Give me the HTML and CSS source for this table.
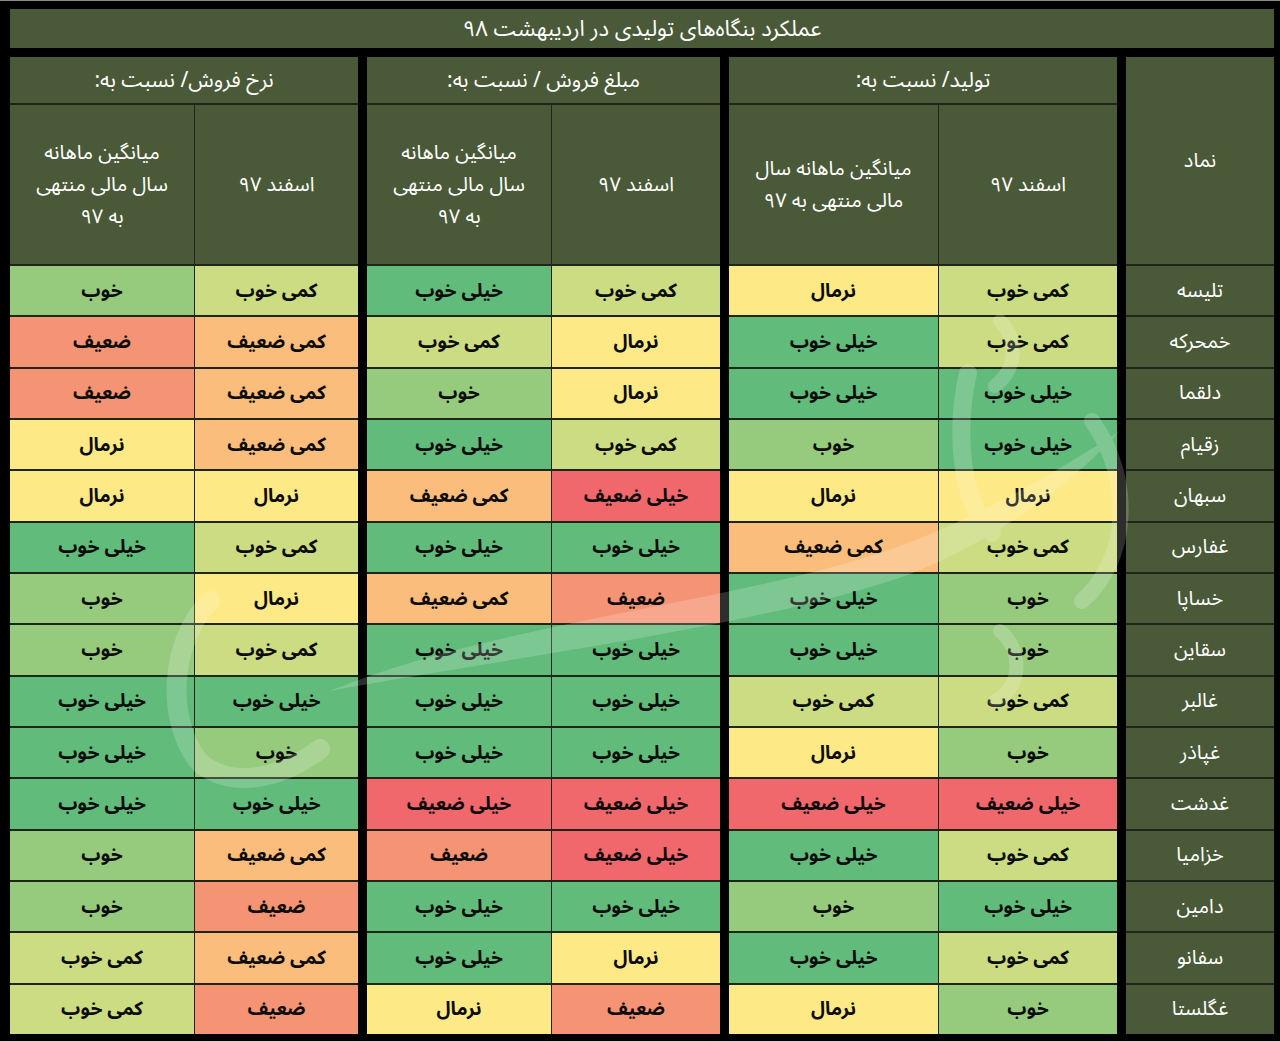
FILE: index.html
```html
<!DOCTYPE html>
<html lang="fa" dir="rtl">
<head>
<meta charset="utf-8">
<title>عملکرد بنگاه‌های تولیدی در اردیبهشت ۹۸</title>
<link rel="stylesheet" href="styles.css">
</head>
<body>
<div class="page">
  <div class="title">عملکرد بنگاه‌های تولیدی در اردیبهشت ۹۸</div>
  <div class="table">
    <div class="col-sym">
      <div class="hd sym-hd">نماد</div>
      <div class="sym">تلیسه</div>
      <div class="sym">خمحرکه</div>
      <div class="sym">دلقما</div>
      <div class="sym">زقیام</div>
      <div class="sym">سبهان</div>
      <div class="sym">غفارس</div>
      <div class="sym">خساپا</div>
      <div class="sym">سقاین</div>
      <div class="sym">غالبر</div>
      <div class="sym">غپاذر</div>
      <div class="sym">غدشت</div>
      <div class="sym">خزامیا</div>
      <div class="sym">دامین</div>
      <div class="sym">سفانو</div>
      <div class="sym">غگلستا</div>
    </div>

    <div class="group g-prod">
      <div class="hd group-hd">تولید/ نسبت به:</div>
      <div class="hd sub">اسفند ۹۷</div>
      <div class="hd sub"><span class="ln">میانگین ماهانه سال</span><span class="ln">مالی منتهی به ۹۷</span></div>
      <div class="c c3">کمی خوب</div><div class="c c4">نرمال</div>
      <div class="c c3">کمی خوب</div><div class="c c1">خیلی خوب</div>
      <div class="c c1">خیلی خوب</div><div class="c c1">خیلی خوب</div>
      <div class="c c1">خیلی خوب</div><div class="c c2">خوب</div>
      <div class="c c4">نرمال</div><div class="c c4">نرمال</div>
      <div class="c c3">کمی خوب</div><div class="c c5">کمی ضعیف</div>
      <div class="c c2">خوب</div><div class="c c1">خیلی خوب</div>
      <div class="c c2">خوب</div><div class="c c1">خیلی خوب</div>
      <div class="c c3">کمی خوب</div><div class="c c3">کمی خوب</div>
      <div class="c c2">خوب</div><div class="c c4">نرمال</div>
      <div class="c c7">خیلی ضعیف</div><div class="c c7">خیلی ضعیف</div>
      <div class="c c3">کمی خوب</div><div class="c c1">خیلی خوب</div>
      <div class="c c1">خیلی خوب</div><div class="c c2">خوب</div>
      <div class="c c3">کمی خوب</div><div class="c c1">خیلی خوب</div>
      <div class="c c2">خوب</div><div class="c c4">نرمال</div>
    </div>

    <div class="group g-amount">
      <div class="hd group-hd">مبلغ فروش / نسبت به:</div>
      <div class="hd sub">اسفند ۹۷</div>
      <div class="hd sub"><span class="ln">میانگین ماهانه</span><span class="ln">سال مالی منتهی</span><span class="ln">به ۹۷</span></div>
      <div class="c c3">کمی خوب</div><div class="c c1">خیلی خوب</div>
      <div class="c c4">نرمال</div><div class="c c3">کمی خوب</div>
      <div class="c c4">نرمال</div><div class="c c2">خوب</div>
      <div class="c c3">کمی خوب</div><div class="c c1">خیلی خوب</div>
      <div class="c c7">خیلی ضعیف</div><div class="c c5">کمی ضعیف</div>
      <div class="c c1">خیلی خوب</div><div class="c c1">خیلی خوب</div>
      <div class="c c6">ضعیف</div><div class="c c5">کمی ضعیف</div>
      <div class="c c1">خیلی خوب</div><div class="c c1">خیلی خوب</div>
      <div class="c c1">خیلی خوب</div><div class="c c1">خیلی خوب</div>
      <div class="c c1">خیلی خوب</div><div class="c c1">خیلی خوب</div>
      <div class="c c7">خیلی ضعیف</div><div class="c c7">خیلی ضعیف</div>
      <div class="c c7">خیلی ضعیف</div><div class="c c6">ضعیف</div>
      <div class="c c1">خیلی خوب</div><div class="c c1">خیلی خوب</div>
      <div class="c c4">نرمال</div><div class="c c1">خیلی خوب</div>
      <div class="c c6">ضعیف</div><div class="c c4">نرمال</div>
    </div>

    <div class="group g-rate">
      <div class="hd group-hd">نرخ فروش/ نسبت به:</div>
      <div class="hd sub">اسفند ۹۷</div>
      <div class="hd sub"><span class="ln">میانگین ماهانه</span><span class="ln">سال مالی منتهی</span><span class="ln">به ۹۷</span></div>
      <div class="c c3">کمی خوب</div><div class="c c2">خوب</div>
      <div class="c c5">کمی ضعیف</div><div class="c c6">ضعیف</div>
      <div class="c c5">کمی ضعیف</div><div class="c c6">ضعیف</div>
      <div class="c c5">کمی ضعیف</div><div class="c c4">نرمال</div>
      <div class="c c4">نرمال</div><div class="c c4">نرمال</div>
      <div class="c c3">کمی خوب</div><div class="c c1">خیلی خوب</div>
      <div class="c c4">نرمال</div><div class="c c2">خوب</div>
      <div class="c c3">کمی خوب</div><div class="c c2">خوب</div>
      <div class="c c1">خیلی خوب</div><div class="c c1">خیلی خوب</div>
      <div class="c c2">خوب</div><div class="c c1">خیلی خوب</div>
      <div class="c c1">خیلی خوب</div><div class="c c1">خیلی خوب</div>
      <div class="c c5">کمی ضعیف</div><div class="c c2">خوب</div>
      <div class="c c6">ضعیف</div><div class="c c2">خوب</div>
      <div class="c c5">کمی ضعیف</div><div class="c c3">کمی خوب</div>
      <div class="c c6">ضعیف</div><div class="c c3">کمی خوب</div>
    </div>
  </div>

  <svg class="watermark" viewBox="0 0 1280 1041" aria-hidden="true">
    <g fill="#ffffff" stroke="#ffffff" opacity="0.18">
      <path stroke="none" d="M330 690 C500 620 750 600 900 545 C980 515 1050 475 1120 430 C1065 490 985 545 905 575 C760 625 520 655 330 690 Z"/>
      <path fill="none" stroke-width="20" stroke-linecap="round" d="M210 600 C170 640 165 720 200 762 C235 790 285 775 320 748"/>
      <path fill="none" stroke-width="16" stroke-linecap="round" d="M1092 420 C1135 480 1128 560 1082 600"/>
      <path fill="none" stroke-width="18" stroke-linecap="round" d="M968 372 C955 430 960 500 992 532"/>
      <path fill="none" stroke-width="14" stroke-linecap="round" d="M1000 320 C1020 340 1015 370 995 385"/>
      <path fill="none" stroke-width="14" stroke-linecap="round" d="M1000 630 C1025 650 1020 690 995 700"/>
    </g>
  </svg>
</div>
</body>
</html>
```

FILE: styles.css
```css
* {
  box-sizing: border-box;
}

html,
body {
  margin: 0;
  padding: 0;
  background: #000;
}

body {
  width: 1280px;
  height: 1041px;
  overflow: hidden;
  font-family: "Noto Sans Arabic", "DejaVu Sans", sans-serif;
}

.page {
  position: relative;
  height: 1041px;
  padding: 8px 6px 7px 10px;
  border-top: 1px solid #8c8c8c;
}

.title {
  height: 39px;
  margin-bottom: 9px;
  background: #4a5937;
  color: #fff;
  font-size: 22px;
  display: flex;
  align-items: center;
  justify-content: center;
}

.table {
  display: flex;
  gap: 9px;
  height: 977px;
}

.col-sym {
  width: 148px;
  display: grid;
  grid-template-rows: 207px repeat(15, 1fr);
  row-gap: 2px;
  background: #1d2618;
}

.group {
  display: grid;
  grid-template-rows: 46px 159px repeat(15, 1fr);
  gap: 2px 1px;
  background: #1d2618;
}

.g-prod {
  width: 388px;
  grid-template-columns: 178px 209px;
}

.g-amount {
  width: 353px;
  grid-template-columns: 168px 184px;
}

.g-rate {
  width: 348px;
  grid-template-columns: 163px 184px;
}

.hd,
.sym {
  background: #4a5937;
  color: #fff;
  font-size: 20px;
  display: flex;
  align-items: center;
  justify-content: center;
  text-align: center;
}

.sub {
  flex-direction: column;
}

.ln {
  display: block;
  height: 32px;
  line-height: 32px;
  overflow: visible;
}

.group-hd {
  grid-column: 1 / -1;
  font-size: 21px;
}

.c {
  display: flex;
  align-items: center;
  justify-content: center;
  font-size: 19px;
  font-weight: bold;
  color: #0c0c0c;
}

.c1 { background: #61bb7b; }
.c2 { background: #96cb7e; }
.c3 { background: #cbdc82; }
.c4 { background: #fde985; }
.c5 { background: #fbbd7b; }
.c6 { background: #f59474; }
.c7 { background: #f0686b; }

.watermark {
  position: absolute;
  top: 0;
  left: 0;
  width: 1280px;
  height: 1041px;
  pointer-events: none;
}
```
